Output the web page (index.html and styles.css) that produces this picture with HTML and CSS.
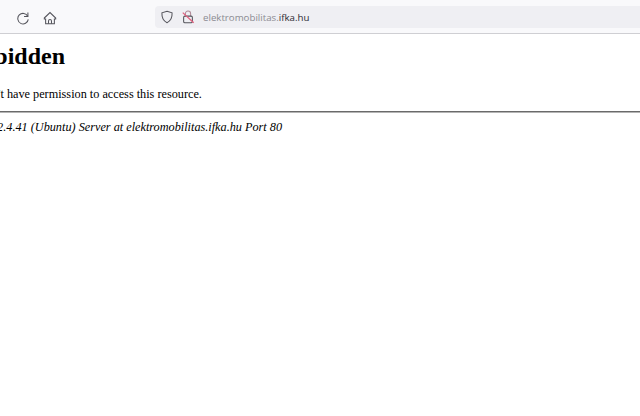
FILE: index.html
```html
<!DOCTYPE html>
<html lang="en">
<head>
  <meta charset="UTF-8" />
  <title>403 Forbidden</title>
  <link rel="stylesheet" href="styles.css">
</head>
<body>
  <div class="toolbar">
    <div class="nav-buttons">
      <svg class="icon" viewBox="0 0 16 16" aria-hidden="true">
        <path d="M13.6 1.800v4.400H9.200" />
        <path d="M13.400 6A6 6 0 1 0 14 9.500" />
      </svg>
      <svg class="icon" viewBox="0 0 16 16" aria-hidden="true">
        <path d="M1.500 8 8 1.800 14.500 8v1.200h-1.500v5.300H3V9.200H1.500z" />
        <path d="M6.300 14.500v-3.200a1.700 1.700 0 0 1 3.400 0v3.200" />
      </svg>
    </div>
    <div class="urlbar">
      <svg class="icon icon-shield" viewBox="0 0 16 16" aria-hidden="true">
        <path d="M8 1.500 13.800 3.200c.3 5.500-1.500 9.300-5.800 11.300C3.700 12.500 1.900 8.700 2.200 3.200z" />
      </svg>
      <svg class="icon icon-lock" viewBox="0 0 16 16" aria-hidden="true">
        <path class="shackle" d="M5 7V4.200a3 3 0 0 1 6 0V7" />
        <rect x="3" y="7" width="10" height="7.500" rx="1.500" />
        <path class="strike" d="M2 3l12.500 11.500" />
      </svg>
      <span class="url">elektromobilitas.<b>ifka.hu</b></span>
    </div>
  </div>

  <div class="page">
    <h1>Forbidden</h1>
    <p>You don't have permission to access this resource.</p>
    <hr>
    <address>Apache/2.4.41 (Ubuntu) Server at elektromobilitas.ifka.hu Port 80</address>
  </div>
</body>
</html>
```

FILE: styles.css
```css
html, body {
  margin: 0;
  padding: 0;
  height: 100%;
  overflow: hidden;
  background: #fff;
}

.toolbar {
  height: 34px;
  box-sizing: border-box;
  padding: 6px 0 5px;
  display: flex;
  align-items: stretch;
  background: #f9f9fb;
  border-bottom: 1px solid #cfcfd3;
}

.nav-buttons {
  width: 155px;
  padding: 2px 0 0 16px;
  box-sizing: border-box;
  display: flex;
  align-items: center;
  gap: 13px;
}

.icon {
  width: 14px;
  height: 14px;
  fill: none;
  stroke: #55555c;
  stroke-width: 1.2;
  flex: none;
}

.urlbar {
  flex: 1;
  display: flex;
  align-items: center;
  padding-left: 5px;
  background: #efeff3;
  border-radius: 4px 0 0 4px;
}

.icon-lock {
  margin-left: 7px;
}

.shackle {
  stroke: #b08a98;
}

.strike {
  stroke: #e2607f;
  stroke-width: 1.500;
}

.url {
  margin-left: 8px;
  padding-top: 1px;
  font-family: "Open Sans", "Noto Sans", sans-serif;
  font-size: 9.700px;
  color: #8b8b92;
}

.url b {
  font-weight: 500;
  color: #2b2b33;
}

.page {
  margin-left: -43px;
  font-family: "Liberation Serif", "Times New Roman", serif;
  font-size: 12.240px;
  color: #000;
}

h1 {
  margin: 0;
  padding-top: 7px;
  font-size: 24px;
  line-height: 30px;
}

p {
  margin: 16px 0 0;
  line-height: 15px;
}

hr {
  margin: 9px 0 0;
  height: 0;
  border: 0;
  border-top: 1px solid #6a6a6a;
  border-bottom: 1px solid #b4b4b4;
}

address {
  margin-top: 7px;
  line-height: 15px;
}
```
